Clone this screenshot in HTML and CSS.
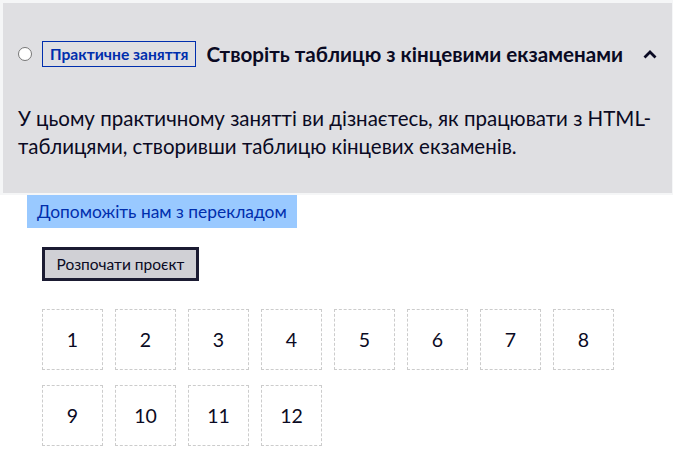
FILE: index.html
```html
<!DOCTYPE html>
<html lang="uk">
<head>
<meta charset="utf-8">
<link rel="stylesheet" href="styles.css">
</head>
<body>
<div class="block">
  <div class="panel">
    <div class="head">
      <span class="radio"></span>
      <span class="badge">Практичне заняття</span>
      <h3 class="title">Створіть таблицю з кінцевими екзаменами</h3>
      <svg class="chev" width="14" height="10" viewBox="0 0 14 10"><path d="M1.5 8.5 L7 3 L12.5 8.5" fill="none" stroke="#0a0a23" stroke-width="2.8"/></svg>
    </div>
    <p class="desc">У цьому практичному занятті ви дізнаєтесь, як працювати з HTML-таблицями, створивши таблицю кінцевих екзаменів.</p>
  </div>
</div>
<div class="content">
  <a class="help">Допоможіть нам з перекладом</a>
  <div class="inner">
    <button class="start">Розпочати проєкт</button>
    <div class="steps">
      <div class="step">1</div>
      <div class="step">2</div>
      <div class="step">3</div>
      <div class="step">4</div>
      <div class="step">5</div>
      <div class="step">6</div>
      <div class="step">7</div>
      <div class="step">8</div>
      <div class="step">9</div>
      <div class="step">10</div>
      <div class="step">11</div>
      <div class="step">12</div>
    </div>
  </div>
</div>
</body>
</html>
```
FILE: styles.css
```css
* { box-sizing: border-box; }
html, body { margin: 0; padding: 0; background: #fff; }
body { font-family: Lato, "Noto Sans", sans-serif; color: #0a0a23; width: 679px; height: 453px; overflow: hidden; }
.block { width: 673px; background: #f5f6f7; padding: 3px 1px 2px 3px; }
.panel { background: #dfdfe2; padding: 38px 15px 33px 15px; }
.head { display: flex; align-items: center; height: 26px; }
.radio { width: 14px; height: 14px; border-radius: 50%; border: 1px solid #767676; background: #fff; margin-right: 10px; flex: none; }
.badge { border: 1.5px solid #002ead; color: #002ead; font-weight: 700; font-size: 15.6px; height: 26px; display: flex; align-items: center; padding: 0 7px; margin-right: 10px; }
.title { margin: 0; font-size: 20.6px; font-weight: 700; flex: 1; }
.chev { flex: none; }
.desc { margin: 37px 0 0; font-size: 20.5px; line-height: 28px; }
.content { padding: 0 0 0 27px; }
.help { display: inline-block; background: #99c9ff; color: #002ead; font-size: 17.4px; line-height: 33px; padding: 0 10px; }
.inner { padding-left: 15px; }
.start { display: block; margin-top: 19px; font-family: Lato, sans-serif; font-size: 15.5px; color: #0a0a23; background: #d0d0d5; border: 3px solid #1b1b32; height: 34px; width: 157px; padding: 0; }
.steps { margin-top: 28px; display: grid; grid-template-columns: repeat(8, 61px); column-gap: 12px; row-gap: 15px; }
.step { width: 61px; height: 61px; border: 1px dashed #ccc; display: flex; align-items: center; justify-content: center; font-size: 19.5px; }
```
